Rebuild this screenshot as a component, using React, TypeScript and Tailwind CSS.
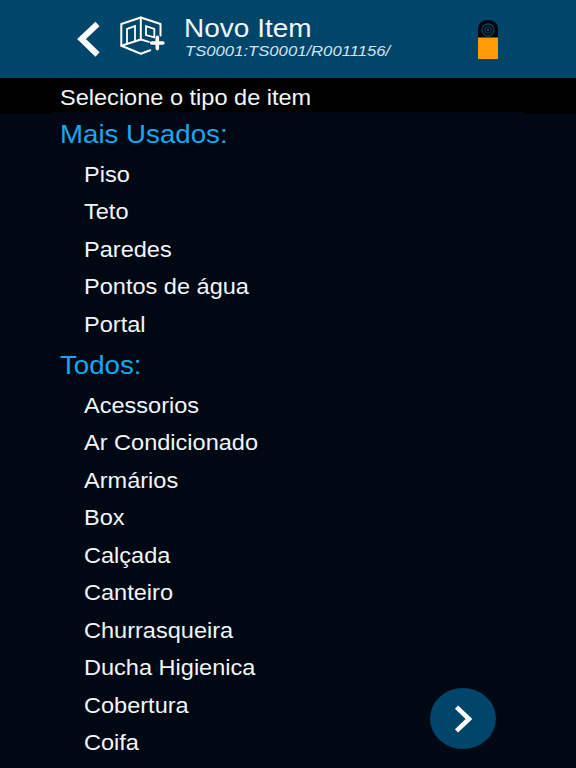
import type { ReactNode } from 'react';

type ItemGroup = {
  title: string;
  items: string[];
};

const groups: ItemGroup[] = [
  {
    title: 'Mais Usados:',
    items: ['Piso', 'Teto', 'Paredes', 'Pontos de água', 'Portal'],
  },
  {
    title: 'Todos:',
    items: [
      'Acessorios',
      'Ar Condicionado',
      'Armários',
      'Box',
      'Calçada',
      'Canteiro',
      'Churrasqueira',
      'Ducha Higienica',
      'Cobertura',
      'Coifa',
    ],
  },
];

function WideText({ children }: { children: ReactNode }) {
  return <span className="inline-block origin-left scale-x-[1.09] whitespace-nowrap">{children}</span>;
}

function BackIcon() {
  return (
    <svg className="block h-[36px] w-[24px]" viewBox="0 0 24 36" fill="none" stroke="#fff" strokeWidth="6">
      <path d="M20.5 3 4.5 18l16 15.5" />
    </svg>
  );
}

// Room seen from the corner: door on the left wall, window on the right one
function RoomAddIcon() {
  return (
    <svg
      className="block h-[40px] w-[46px]"
      viewBox="0 0 46 40"
      fill="none"
      stroke="#fff"
      strokeWidth="2"
      strokeLinejoin="round"
      strokeLinecap="round"
    >
      <path d="M40.5 19.5V8L20.8 1.5 1.3 8V29.8L20.8 37.8l9.4-3.6" />
      <path d="M20.8 1.5V23.5L1.3 29.8M20.8 23.5l8 2.4" />
      <path d="M7 27.5V12.8l8-2.7v14.6" strokeWidth="1.8" strokeLinejoin="miter" />
      <path d="M26 10.2l8.3 2.8v8.4l-8.3-2.4z" strokeWidth="1.8" strokeLinejoin="miter" />
      <path d="M37.3 21.4v11.2M31.7 27h11.2" strokeWidth="3.6" />
    </svg>
  );
}

function DeviceIcon() {
  return (
    <svg className="block h-[39px] w-[20px]" viewBox="0 0 20 39" fill="none">
      <path d="M0 18V9.5C0 3.5 4 0 10 0s10 3.5 10 9.5V18z" fill="#02060a" />
      <circle cx="10" cy="10" r="6" stroke="#063f63" strokeWidth="1.4" />
      <circle cx="10" cy="10" r="3.2" stroke="#063a59" strokeWidth="1.2" />
      <circle cx="10" cy="10" r="1.2" fill="#084a70" />
      <path d="M0 17.5h20V39H0z" fill="#ff9c05" />
    </svg>
  );
}

export default function App() {
  return (
    <main className="flex h-[768px] w-[576px] flex-col overflow-hidden bg-[#000814] font-['Liberation_Sans',Arial,sans-serif] text-[#f1f6f8]">
      <header className="flex h-[78px] flex-none items-start bg-[#00456a] pl-[77px] pr-[78px]">
        <button className="mt-[21px]">
          <BackIcon />
        </button>
        <div className="ml-[19px] mt-[16px]">
          <RoomAddIcon />
        </div>
        <div className="ml-[17.5px] mt-[13px] flex-1">
          <h1 className="text-[25.7px] leading-[30px]">
            <WideText>Novo Item</WideText>
          </h1>
          <p className="ml-px text-[15.3px] italic leading-[16px] text-[#d3e3ec]">
            <WideText>TS0001:TS0001/R0011156/</WideText>
          </p>
        </div>
        <div className="mt-[20px]">
          <DeviceIcon />
        </div>
      </header>

      <div className="flex h-[34px] flex-none items-start">
        <div className="h-[36px] w-[52px] bg-black" />
        <p className="h-[34px] flex-1 bg-black pl-[8px] pt-px text-[21.6px] leading-[38px]">
          <WideText>Selecione o tipo de item</WideText>
        </p>
        <div className="h-[36px] w-[52px] bg-black" />
      </div>

      <div className="flex-none pt-px">
        {groups.map(group => (
          <section key={group.title}>
            <h2 className="h-[43.5px] pl-[60px] text-[25.4px] leading-[43.5px] text-[#16a8ee]">
              <WideText>{group.title}</WideText>
            </h2>
            <ul className="pl-[84px] text-[21.6px] leading-[35.5px]">
              {group.items.map(item => (
                <li key={item} className="h-[37.5px]">
                  <WideText>{item}</WideText>
                </li>
              ))}
            </ul>
          </section>
        ))}
      </div>

      <button className="fixed left-[430px] top-[688px] flex h-[61px] w-[66px] items-center justify-center rounded-[50%] bg-[#00456a]">
        <svg className="block h-[28px] w-[20px]" viewBox="0 0 20 28" fill="none" stroke="#fff" strokeWidth="4.6">
          <path d="M3.5 2.2 16 14 3.5 25.8" />
        </svg>
      </button>
    </main>
  );
}
